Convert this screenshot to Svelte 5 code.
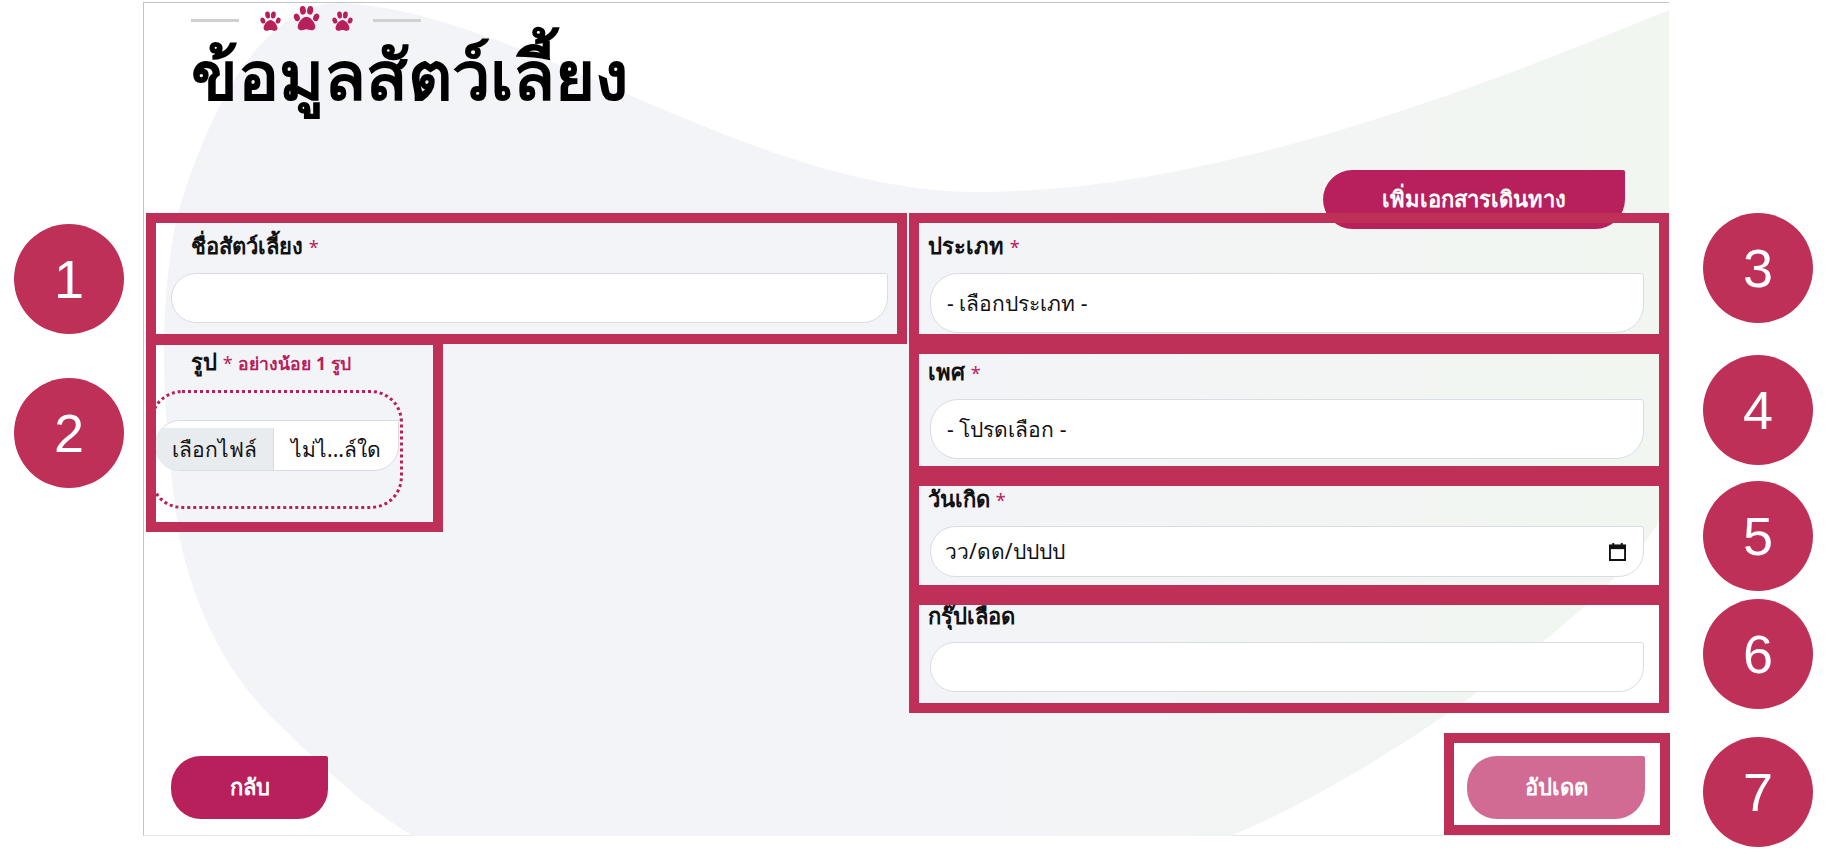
<script>
    const markers = [
        { n: 1, x: 14, y: 224 },
        { n: 2, x: 14, y: 378 },
        { n: 3, x: 1703, y: 213 },
        { n: 4, x: 1703, y: 355 },
        { n: 5, x: 1703, y: 481 },
        { n: 6, x: 1703, y: 599 },
        { n: 7, x: 1703, y: 737 }
    ];
</script>

{#snippet paw(size)}
    <svg class="paw" width={size} height={size} viewBox="0 0 24 24" aria-hidden="true">
        <ellipse cx="4" cy="11" rx="2.4" ry="3.2" transform="rotate(-22 4 11)" />
        <ellipse cx="9" cy="5.2" rx="2.5" ry="3.6" transform="rotate(-8 9 5.2)" />
        <ellipse cx="15" cy="5.2" rx="2.5" ry="3.6" transform="rotate(8 15 5.2)" />
        <ellipse cx="20" cy="11" rx="2.4" ry="3.2" transform="rotate(22 20 11)" />
        <path d="M12 10.5c-3 0-6.500 4-7.200 7.500-.5 2.600 1.400 4 3.200 3.700 1.500-.2 2.700-.9 4-.9s2.500.7 4 .9c1.800.3 3.700-1.100 3.200-3.700-.7-3.500-4.200-7.500-7.200-7.500z" />
    </svg>
{/snippet}

<div class="page">
    <main class="frame">
        <svg class="blob" viewBox="144 3 1525 833" width="1525" height="833" aria-hidden="true">
            <defs>
                <linearGradient id="blobFill" x1="0" y1="0" x2="1" y2="0">
                    <stop offset="0" stop-color="#f3f4f7" />
                    <stop offset="0.55" stop-color="#f3f4f7" />
                    <stop offset="1" stop-color="#f1f6f0" />
                </linearGradient>
            </defs>
            <path
                fill="url(#blobFill)"
                d="M340 3C520 10 750 192 977 192C1200 192 1450 100 1669 10L1669 505C1650 540 1625 570 1586 605C1480 700 1340 790 1231 836L413 836C370 810 330 775 285 730C240 690 200 630 180 540C158 400 160 290 178 213C215 90 270 3 340 3Z"
            />
        </svg>

        <div class="ornament">
            <span class="rule"></span>
            <span class="paws">
                {@render paw(23)}
                {@render paw(29)}
                {@render paw(23)}
            </span>
            <span class="rule"></span>
        </div>

        <h1>ข้อมูลสัตว์เลี้ยง</h1>

        <div class="toolbar">
            <button class="btn add">เพิ่มเอกสารเดินทาง</button>
        </div>

        <div class="form">
            <div class="col">
                <div class="box name">
                    <label for="pet-name">ชื่อสัตว์เลี้ยง <em>*</em></label>
                    <input id="pet-name" class="field h50" type="text" />
                </div>
                <div class="box photo">
                    <p class="label">รูป <em>*</em> <small>อย่างน้อย 1 รูป</small></p>
                    <div class="dropzone">
                        <div class="file">
                            <span class="pick">เลือกไฟล์</span>
                            <span class="none">ไม่ไ...ล์ใด</span>
                        </div>
                    </div>
                </div>
            </div>

            <div class="col">
                <div class="box side type">
                    <label for="pet-type">ประเภท <em>*</em></label>
                    <select id="pet-type" class="field h60">
                        <option>- เลือกประเภท -</option>
                    </select>
                </div>
                <div class="box side sex">
                    <label for="pet-sex">เพศ <em>*</em></label>
                    <select id="pet-sex" class="field h60">
                        <option>- โปรดเลือก -</option>
                    </select>
                </div>
                <div class="box side birth">
                    <label for="pet-birth">วันเกิด <em>*</em></label>
                    <div class="date">
                        <input id="pet-birth" class="field h51" type="text" value="วว/ดด/ปปปป" readonly />
                        <svg class="cal" width="17" height="19" viewBox="0 0 18 20" aria-hidden="true">
                            <path d="M1 3.500h16v15.500H1z" fill="none" stroke="#111" stroke-width="2" />
                            <path d="M1 3h16v4.500H1z" fill="#111" />
                            <path d="M4.500 1v3M13.500 1v3" stroke="#111" stroke-width="2" />
                        </svg>
                    </div>
                </div>
                <div class="box side blood">
                    <label for="pet-blood">กรุ๊ปเลือด</label>
                    <input id="pet-blood" class="field h50" type="text" />
                </div>
            </div>
        </div>

        <div class="footer">
            <button class="btn back">กลับ</button>
            <div class="box submit">
                <button class="btn update">อัปเดต</button>
            </div>
        </div>
    </main>

    {#each markers as m}
        <span class="marker" style="left: {m.x}px; top: {m.y}px">{m.n}</span>
    {/each}
</div>

<style>
    :global(body) {
        margin: 0;
        background: #fff;
        font-family: "Noto Sans", "Liberation Sans", sans-serif;
        color: #111;
    }

    .page {
        position: relative;
        width: 1828px;
        height: 854px;
        overflow: hidden;
    }

    .frame {
        position: relative;
        box-sizing: border-box;
        width: 1526px;
        height: 834px;
        margin: 2px 0 0 143px;
        border-left: 1px solid #c4c4c4;
        border-top: 1px solid #c4c4c4;
        border-bottom: 1px solid #e8e8e8;
    }

    .blob {
        position: absolute;
        left: 0;
        top: 0;
    }

    .ornament {
        position: relative;
        display: flex;
        align-items: center;
        height: 34px;
        padding-left: 47px;
    }

    .rule {
        width: 48px;
        height: 3px;
        background: #d0d0d0;
    }

    .paws {
        display: flex;
        align-items: flex-end;
        justify-content: center;
        gap: 10px;
        width: 134px;
        margin-bottom: 4px;
    }

    .paw {
        fill: #b8205c;
    }

    h1 {
        position: relative;
        margin: 0 0 0 47px;
        height: 133px;
        font-size: 68.500px;
        line-height: 74px;
        font-weight: 900;
        color: #000;
    }

    .toolbar {
        position: relative;
        display: flex;
        justify-content: flex-end;
        padding-right: 44px;
        margin-bottom: -16px;
    }

    .btn {
        border: 0;
        background: #b8205c;
        color: #fff;
        font: inherit;
        font-size: 22px;
        font-weight: 700;
        border-radius: 30px 2px 30px 30px;
    }

    .add {
        width: 302px;
        height: 59px;
    }

    .form {
        display: grid;
        grid-template-columns: 761px 760px;
        column-gap: 2px;
        margin-left: 2px;
    }

    .col {
        display: flex;
        flex-direction: column;
    }

    .box {
        position: relative;
        box-sizing: border-box;
        border: 10px solid #bf3059;
    }

    label,
    .label {
        display: block;
        margin: 0;
        height: 24px;
        line-height: 20px;
        font-size: 22px;
        font-weight: 700;
    }

    em {
        color: #b8205c;
        font-size: 18px;
        font-style: normal;
        font-weight: 400;
    }

    small {
        color: #b8205c;
        font-size: 17.500px;
    }

    .field {
        display: block;
        box-sizing: border-box;
        width: 100%;
        margin: 14px 0 0;
        padding: 0 16px;
        border: 1px solid #d9dce1;
        border-radius: 28px 3px 28px 28px;
        background: #fff;
        color: #111;
        font: inherit;
        font-size: 21px;
        appearance: none;
        outline: none;
    }

    .h50 {
        height: 50px;
    }

    .h51 {
        height: 51px;
    }

    .h60 {
        height: 60px;
    }

    .name {
        padding: 12px 9px 11px 15px;
    }

    .name label {
        margin-left: 20px;
    }

    .photo {
        width: 297px;
        height: 197px;
        margin-top: -9px;
        overflow: hidden;
    }

    .photo .label {
        margin: 6px 0 0 35px;
    }

    .dropzone {
        box-sizing: border-box;
        width: 253px;
        height: 119px;
        margin: 15px 0 0 -6px;
        padding: 27px 1px 0 2px;
        border: 3px dotted #b8205c;
        border-radius: 32px;
    }

    .file {
        display: flex;
        box-sizing: border-box;
        height: 51px;
        padding-top: 7px;
        border: 1px solid #d9dce1;
        border-radius: 25px 0 25px 25px;
        background: #fff;
        overflow: hidden;
        font-size: 21px;
    }

    .pick {
        width: 117px;
        text-align: center;
        line-height: 43px;
        background: #e9ecef;
        border-right: 1px solid #d9dce1;
    }

    .none {
        flex: 1;
        text-align: center;
        line-height: 43px;
    }

    .side {
        padding-left: 9px;
        padding-right: 15px;
    }

    .side .field {
        width: calc(100% - 2px);
        margin-left: 2px;
    }

    .date .field {
        padding-left: 14px;
    }

    .type {
        height: 131px;
        padding-top: 12px;
    }

    .sex {
        height: 132px;
        padding-top: 7px;
    }

    .birth {
        height: 119px;
        padding-top: 2px;
    }

    .blood {
        height: 118px;
    }

    .blood .field {
        margin-top: 13px;
    }

    .date {
        position: relative;
    }

    .cal {
        position: absolute;
        right: 18px;
        bottom: 16px;
    }

    .footer {
        position: relative;
        display: flex;
        justify-content: space-between;
        align-items: flex-start;
        margin-top: 20px;
        padding-left: 27px;
    }

    .back {
        width: 157px;
        height: 63px;
        margin-top: 23px;
    }

    .submit {
        width: 226px;
        height: 102px;
        margin-right: -1px;
        padding: 13px 0 0 13px;
    }

    .update {
        width: 178px;
        height: 63px;
        background: #d26b94;
    }

    .marker {
        position: absolute;
        width: 110px;
        height: 110px;
        border-radius: 50%;
        background: #bf3059;
        color: #fff;
        font-family: "Liberation Sans", sans-serif;
        font-size: 54px;
        line-height: 110px;
        text-align: center;
    }
</style>
